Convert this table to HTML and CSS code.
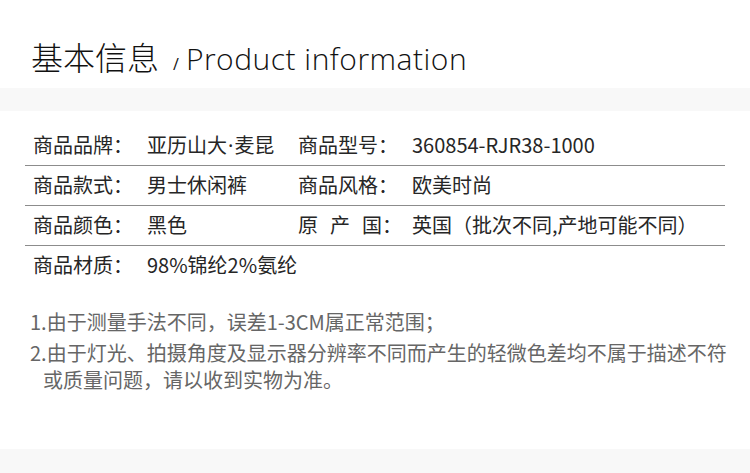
FILE: index.html
```html
<html lang="zh-CN">
<head>
  <meta charset="UTF-8">
  <meta name="viewport" content="width=device-width">
  <title>基本信息</title>
  <link rel="stylesheet" href="styles.css">
</head>

<body>

<div class="head">
  <span class="zh">基本信息</span>
  <span class="slash">/</span>
  <span class="en">Product information</span>
</div>
<div class="band"></div>

<div class="info">
  <div class="row">
    <span class="k">商品品牌：</span><span class="v">亚历山大<span class="dot">·</span>麦昆</span>
    <span class="k">商品型号：</span><span class="v">360854-RJR38-1000</span>
  </div>
  <div class="row">
    <span class="k">商品款式：</span><span class="v">男士休闲裤</span>
    <span class="k">商品风格：</span><span class="v">欧美时尚</span>
  </div>
  <div class="row">
    <span class="k">商品颜色：</span><span class="v">黑色</span>
    <span class="k"><i class="sp">原</i><i class="sp">产</i>国：</span><span class="v">英国（批次不同,产地可能不同）</span>
  </div>
  <div class="row last">
    <span class="k">商品材质：</span><span class="v wide">98%锦纶2%氨纶</span>
  </div>
</div>

<div class="notes">
  <p>1.由于测量手法不同，误差1-3CM属正常范围；</p>
  <p>2.由于灯光、拍摄角度及显示器分辨率不同而产生的轻微色差均不属于描述不符或质量问题，请以收到实物为准。</p>
</div>

<div class="band foot"></div>

</body>
</html>
```

FILE: styles.css
```css
body {
    margin: 0;
    background: #fff;
    font-family: "Noto Sans CJK SC", "Noto Sans", sans-serif;
    color: #262626;
}
.head {
    height: 88px;
    box-sizing: border-box;
    padding: 37px 0 0 31px;
    display: flex;
    align-items: baseline;
    color: #111;
}
.head .zh {
    font-size: 32px;
    font-weight: 300;
    line-height: 38px;
}
.head .slash {
    font-family: "Open Sans", sans-serif;
    font-size: 16px;
    margin: 0 7px 0 14px;
}
.head .en {
    font-family: "Open Sans", sans-serif;
    font-size: 30px;
    font-weight: 300;
    letter-spacing: 0.5px;
}
.band {
    height: 23px;
    background: #f8f8f8;
}
.foot {
    height: 24px;
}
.info {
    margin: 15px 25px 0;
    width: 700px;
}
.row {
    display: grid;
    grid-template-columns: 114px 151px 114px 1fr;
    height: 39px;
    line-height: 38px;
    padding-left: 8px;
    border-bottom: 1px solid #8c8c8c;
    font-size: 20px;
    white-space: nowrap;
}
.row.last {
    border-bottom: none;
}
.row .wide {
    grid-column: span 3;
}
.dot {
    font-family: "Noto Sans", sans-serif;
    margin: 0 1px;
}
.sp {
    font-style: normal;
    margin-right: 12px;
}
.notes {
    margin: 23px 20px 0 30px;
    color: #666;
    font-size: 20px;
    line-height: 27px;
}
.notes p {
    margin: 0 0 4px;
    padding-left: 13px;
    text-indent: -13px;
}
.notes + .band {
    margin-top: 56px;
}
```
